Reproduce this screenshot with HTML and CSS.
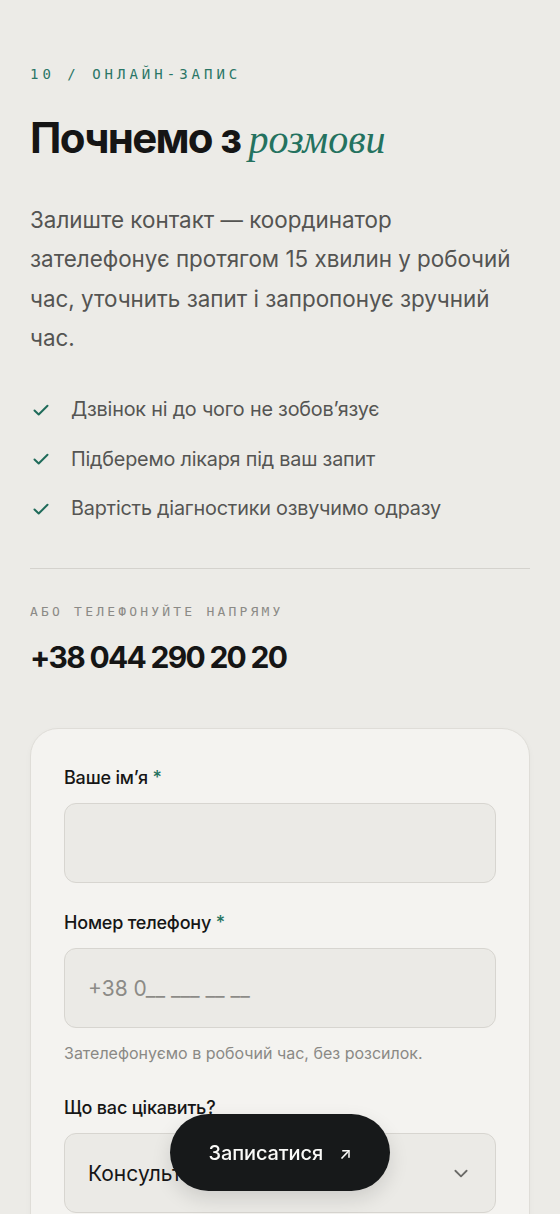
FILE: index.html
```html
<!DOCTYPE html>
<html lang="uk">
<head>
<meta charset="utf-8">
<meta name="viewport" content="width=device-width, initial-scale=1">
<title>Онлайн-запис</title>
<link rel="stylesheet" href="styles.css">
</head>
<body>
<main class="page">
  <section class="intro">
    <p class="eyebrow">10 / ОНЛАЙН-ЗАПИС</p>
    <h1 class="title">Почнемо з <em class="title-accent">розмови</em></h1>
    <p class="lead">Залиште контакт — координатор зателефонує протягом 15 хвилин у робочий час, уточнить запит і запропонує зручний час.</p>
    <ul class="checks">
      <li class="check-item"><svg class="check-icon" viewBox="0 0 20 20" aria-hidden="true"><path d="M3.5 10.5l4.2 4L16.5 5.8"/></svg><span>Дзвінок ні до чого не зобов’язує</span></li>
      <li class="check-item"><svg class="check-icon" viewBox="0 0 20 20" aria-hidden="true"><path d="M3.5 10.5l4.2 4L16.5 5.8"/></svg><span>Підберемо лікаря під ваш запит</span></li>
      <li class="check-item"><svg class="check-icon" viewBox="0 0 20 20" aria-hidden="true"><path d="M3.5 10.5l4.2 4L16.5 5.8"/></svg><span>Вартість діагностики озвучимо одразу</span></li>
    </ul>
  </section>

  <section class="direct">
    <p class="direct-label">АБО ТЕЛЕФОНУЙТЕ НАПРЯМУ</p>
    <p class="direct-phone">+38 044 290 20 20</p>
  </section>

  <form class="card">
    <div class="field">
      <label class="field-label" for="name">Ваше ім’я <span class="req">*</span></label>
      <input class="input" id="name" type="text">
    </div>
    <div class="field">
      <label class="field-label" for="phone">Номер телефону <span class="req">*</span></label>
      <input class="input" id="phone" type="tel" placeholder="+38 0__ ___ __ __">
      <p class="hint">Зателефонуємо в робочий час, без розсилок.</p>
    </div>
    <div class="field">
      <label class="field-label" for="topic">Що вас цікавить?</label>
      <div class="select">
        <span class="select-value">Консультація</span>
        <svg class="chevron" viewBox="0 0 16 16" aria-hidden="true"><path d="M3 6l5 5 5-5"/></svg>
      </div>
    </div>
  </form>
</main>

<button class="cta" type="button">Записатися <span class="cta-arrow">↗</span></button>
</body>
</html>
```

FILE: styles.css
```css
* { box-sizing: border-box; }

html, body {
  margin: 0;
  padding: 0;
}

body {
  background: #ecebe7;
  color: #141414;
  font-family: Inter, "Noto Sans", "Liberation Sans", sans-serif;
}

.page {
  padding: 64px 30px 120px;
}

.eyebrow {
  margin: 0;
  font-family: "DejaVu Sans Mono", "Liberation Mono", monospace;
  font-size: 14px;
  line-height: 20px;
  letter-spacing: 4px;
  color: #2a7666;
}

.title {
  margin: 30px 0 0;
  font-size: 42px;
  line-height: 48px;
  font-weight: 700;
  letter-spacing: -1.7px;
  color: #151515;
}

.title-accent {
  font-family: "Liberation Serif", "DejaVu Serif", serif;
  font-style: italic;
  font-weight: 400;
  font-size: 40px;
  letter-spacing: 0;
  color: #24725f;
}

.lead {
  margin: 36px 0 0;
  max-width: 490px;
  font-size: 22.4px;
  line-height: 39.3px;
  color: #545452;
}

.checks {
  list-style: none;
  margin: 39px 0 0;
  padding: 0;
  display: flex;
  flex-direction: column;
  gap: 22.5px;
}

.check-item {
  display: flex;
  align-items: center;
  gap: 20px;
  font-size: 19.8px;
  line-height: 27px;
  color: #555553;
  letter-spacing: -0.2px;
}

.check-icon {
  width: 20px;
  height: 20px;
  flex: none;
  margin-left: 1px;
  fill: none;
  stroke: #1f6b5a;
  stroke-width: 2;
  stroke-linecap: round;
  stroke-linejoin: round;
}

.direct {
  margin-top: 46px;
  border-top: 1px solid #d4d2cd;
  padding-top: 34px;
}

.direct-label {
  margin: 0;
  font-family: "DejaVu Sans Mono", "Liberation Mono", monospace;
  font-size: 13px;
  line-height: 18px;
  letter-spacing: 3.2px;
  color: #8b8a86;
}

.direct-phone {
  margin: 18px 0 0;
  font-size: 30px;
  line-height: 36px;
  font-weight: 700;
  letter-spacing: -1.7px;
  color: #151515;
}

.card {
  margin-top: 53px;
  background: #f4f3f0;
  border: 1px solid #dfddd8;
  border-radius: 28px;
  padding: 37px 33px 40px;
  display: flex;
  flex-direction: column;
  gap: 28px;
  box-shadow: 0 2px 6px rgba(0, 0, 0, 0.03);
}

.field {
  display: flex;
  flex-direction: column;
}

.field-label {
  font-size: 18px;
  line-height: 24px;
  font-weight: 500;
  color: #161616;
  letter-spacing: -0.2px;
}

.req {
  color: #24725f;
}

.input,
.select {
  margin-top: 13px;
  height: 80px;
  width: 100%;
  border: 1px solid #d7d5d0;
  border-radius: 12px;
  background: #ebeae6;
  padding: 0 23px;
  font-family: inherit;
  font-size: 21px;
  color: #161616;
}

.input::placeholder {
  color: #8c8b87;
}

.hint {
  margin: 14px 0 4px;
  font-size: 16px;
  line-height: 22px;
  color: #8a8985;
}

.select {
  display: flex;
  align-items: center;
  justify-content: space-between;
}

.select-value {
  font-size: 21px;
  color: #161616;
}

.chevron {
  width: 18px;
  height: 18px;
  margin-right: 2px;
  fill: none;
  stroke: #6a6a67;
  stroke-width: 1.6;
  stroke-linecap: round;
  stroke-linejoin: round;
}

.cta {
  position: fixed;
  left: 50%;
  bottom: 23px;
  transform: translateX(-50%);
  width: 220px;
  height: 77px;
  border: 0;
  border-radius: 40px;
  background: #17191a;
  color: #fafaf8;
  font-family: inherit;
  font-size: 20px;
  font-weight: 500;
  letter-spacing: -0.1px;
  display: flex;
  align-items: center;
  justify-content: center;
  gap: 16px;
  box-shadow: 0 8px 20px rgba(0, 0, 0, 0.12);
}

.cta-arrow {
  font-size: 16px;
}
```
